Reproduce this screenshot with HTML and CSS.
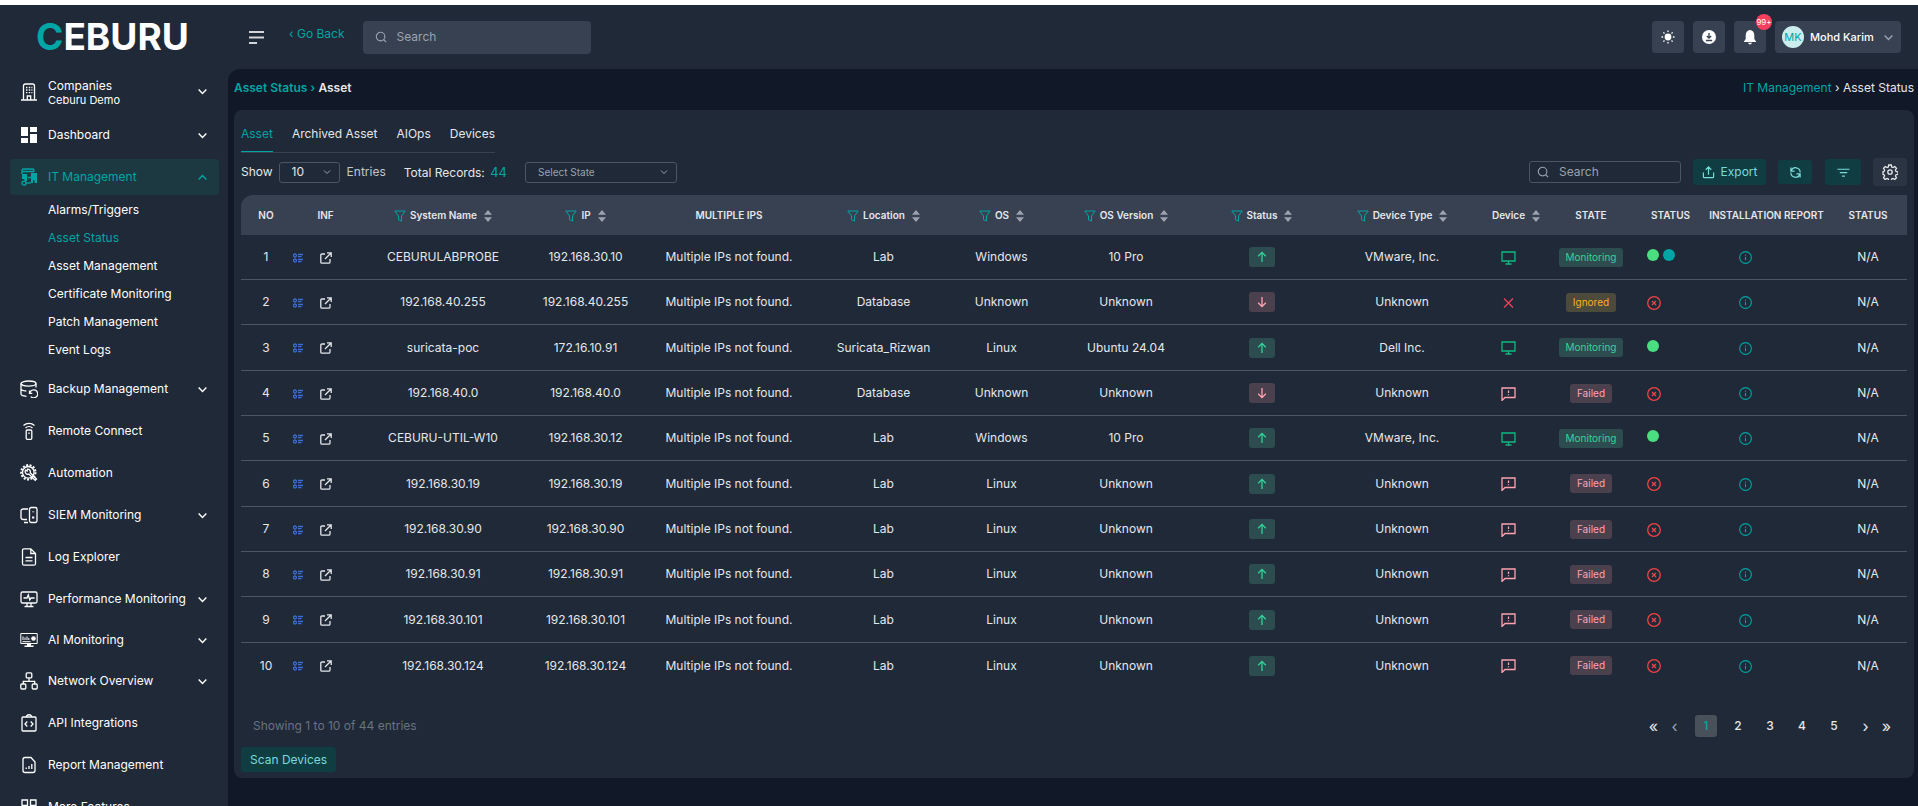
FILE: index.html
```html
<!DOCTYPE html>
<html lang="en">
<head>
  <meta charset="UTF-8">
  <meta name="viewport" content="width=device-width, initial-scale=1.0">
  <title>Ceburu - Asset Status</title>
  <link rel="stylesheet" href="styles.css">
</head>
<body>

  <!-- icon sprite -->
  <svg class="sprite" aria-hidden="true">
    <symbol id="i-down" viewBox="0 0 10 10"><path d="M1.5 3.2 5 6.8l3.500-3.600"/></symbol>
    <symbol id="i-up" viewBox="0 0 10 10"><path d="M1.500 6.800 5 3.200l3.500 3.600"/></symbol>
    <symbol id="i-building" viewBox="0 0 18 18"><path d="M1 17h16M3.500 17V3q0-2 2-2h7q2 0 2 2v14M7.300 17v-4h3.400v4"/><path d="M6 4.500h1.400M8.800 4.500h1.400M11.400 4.500h1M6 7h1.400M8.800 7h1.400M11.400 7h1M6 9.600h1.400M8.800 9.600h1.400M11.400 9.600h1"/></symbol>
    <symbol id="i-dashboard" viewBox="0 0 18 18"><path class="solid" d="M1 1h7v9H1zM10 1h7v5h-7zM1 12h7v5H1zM10 8h7v9h-7z"/></symbol>
    <symbol id="i-it" viewBox="0 0 18 18"><path d="M2 6V2.500Q2 1 3.500 1h9q1.500 0 1.500 1.500V4M2 3.500h12M8 9.500h3"/><path class="solid" d="M2 6h5v7H5l-1-2H2zM11 5h6v10h-2l-1-3h-1v3h-2z"/><circle cx="4" cy="15.200" r="2"/><path d="M6 15h5"/></symbol>
    <symbol id="i-backup" viewBox="0 0 18 18"><ellipse cx="8.500" cy="3.600" rx="7.500" ry="2.600"/><path d="M1 3.600v10.200c0 1.400 2.500 2.300 5.500 2.500M16 3.600v4M1 8.700c0 1.300 2.300 2.100 5.300 2.300"/><path d="M9.500 10.500v2.800h2.800M9.800 13a4 4 0 1 1 1 3.600"/></symbol>
    <symbol id="i-remote" viewBox="0 0 18 18"><path d="M3.500 3.500a8 8 0 0 1 11 0M5.500 6a5 5 0 0 1 7 0"/><rect x="6.200" y="8" width="5.600" height="9.300" rx="1"/><path d="M9 10.500v1.500"/></symbol>
    <symbol id="i-auto" viewBox="0 0 18 18"><circle cx="8.300" cy="8.300" r="7.200" stroke-width="2" stroke-dasharray="2 1.500"/><circle cx="8.300" cy="8.300" r="5.800"/><path d="M5.500 6.200l1.700.8.300-1.800a2.700 2.700 0 0 1 2.800 3.600l6.200 6.200-1.300 1.300-6.400-6.200a2.700 2.700 0 0 1-3.300-3.900z"/></symbol>
    <symbol id="i-siem" viewBox="0 0 18 18"><path d="M8 3H3.500Q1 3 1 5v6.500Q1 13.500 3.500 13.500H7M4 16.500h4"/><rect x="9.500" y="1.500" width="7.500" height="15" rx="1.800"/><path d="M13.200 5.500v.8M13.200 10.500v2" stroke-width="2.200"/></symbol>
    <symbol id="i-log" viewBox="0 0 18 18"><path d="M10.800 0.800H4q-1.500 0-1.500 1.500v13.400q0 1.500 1.500 1.500h10q1.500 0 1.500-1.500V5.500zV5.500h4.700M5.500 9.500h7M5.500 12.800h7"/></symbol>
    <symbol id="i-perf" viewBox="0 0 18 18"><rect x="1" y="2" width="16" height="11" rx="1.500"/><path d="M3.500 8H7l1.300-3 1.500 5 1.300-2h3.500M7 13v3M11 13v3M4.500 16.500h9"/></symbol>
    <symbol id="i-ai" viewBox="0 0 18 18"><path stroke-width="1" d="M.8 2.500h16.400v10H.8zM3 9V5.500M5 9V6.500M7 9V5.500M8.800 9V7M2.500 10.700h8"/><circle class="solid" cx="13.500" cy="7.500" r="2.300"/><path class="solid" d="M7 13h4v1.500h2.500V16h-9v-1.500H7z"/></symbol>
    <symbol id="i-network" viewBox="0 0 18 18"><rect x="6.200" y=".9" width="5.600" height="5" rx="1"/><rect x=".8" y="12" width="5" height="5" rx="1"/><rect x="12.200" y="12" width="5" height="5" rx="1"/><path d="M9 6v3M3.300 12V9.300h11.400V12"/></symbol>
    <symbol id="i-api" viewBox="0 0 18 18"><rect x="2" y="3" width="14" height="14" rx="1"/><path d="M6.500 3V2Q9-.5 11.500 2v1M7.300 7.500 5 10l2.300 2.500M10.700 7.500 13 10l-2.300 2.500"/></symbol>
    <symbol id="i-report" viewBox="0 0 18 18"><path d="M11 1.500H5q-2 0-2 2v11q0 2 2 2h8q2 0 2-2V6z"/><path d="M6.200 13v-1.500M9 13V10M11.800 13V8"/></symbol>
    <symbol id="i-more" viewBox="0 0 18 18"><path d="M2 2h5.500v5.500H2zM10.500 2H16v5.500h-5.500zM2 10.500h5.500V16H2zM10.500 10.500H16V16h-5.500z"/></symbol>
    <symbol id="i-menu" viewBox="0 0 16 14"><path stroke-width="1.800" d="M0 2h15M0 7.500h15M0 13h8"/></symbol>
    <symbol id="i-search" viewBox="0 0 14 14"><circle cx="6.500" cy="6.500" r="5"/><path d="M10.200 10.200 13 13"/></symbol>
    <symbol id="i-sun" viewBox="0 0 14 14"><circle class="solid" cx="7" cy="7" r="3.400"/><path d="M7 .5v1.600M7 11.900v1.600M.5 7h1.600M11.900 7h1.600M2.400 2.400l1.100 1.100M10.500 10.500l1.100 1.100M2.400 11.600l1.100-1.100M10.500 3.500l1.100-1.100"/></symbol>
    <symbol id="i-download" viewBox="0 0 14 14"><circle class="solid" cx="7" cy="7" r="7"/><path stroke="#374151" d="M7 3v5M4.800 6 7 8.200 9.200 6M4 10.500h6"/></symbol>
    <symbol id="i-bell" viewBox="0 0 14 16"><path class="solid" d="M7 1Q3 1.500 2.700 6v4L1 12.500V13h12v-.5L11.300 10V6Q11 1.500 7 1zM5 13.800h4Q8.500 15.500 7 15.500T5 13.800z"/></symbol>
    <symbol id="i-export" viewBox="0 0 14 14"><path d="M7 9.500V1M4 4l3-3 3 3M1.500 7v4.500q0 1 1 1h9q1 0 1-1V7"/></symbol>
    <symbol id="i-refresh" viewBox="0 0 14 14"><path d="M2 1.500v4h4M2.300 5.200A5 5 0 0 1 12 7M12 12.500v-4H8M11.700 8.800A5 5 0 0 1 2 7"/></symbol>
    <symbol id="i-lines" viewBox="0 0 14 14"><path d="M.5 3.500h13M3 7.200h8M5.500 11h3"/></symbol>
    <symbol id="i-gear" viewBox="0 0 16 16"><circle cx="8" cy="8" r="2.200"/><path d="M6.700 1h2.600l.4 2 1.300.600 1.800-1.100 1.700 1.800-1.100 1.700.600 1.400 2 .400v2.500l-2 .4-.6 1.300 1.100 1.700-1.700 1.800-1.800-1.100-1.300.600-.4 2H6.700l-.4-2-1.300-.600-1.800 1.100-1.700-1.800 1.100-1.700L2 10.700l-1-.4V7.800l1-.4.600-1.400-1.100-1.700 1.700-1.800L5 3.600 6.300 3z"/></symbol>
    <symbol id="i-funnel" viewBox="0 0 12 12"><path d="M.8 1h10.400L7.500 6v5l-3-1.200V6z"/></symbol>
    <symbol id="i-sort" viewBox="0 0 8 12"><path class="solid" d="M4 0 8 4.800H0zM4 12 0 7.200h8z"/></symbol>
    <symbol id="i-list" viewBox="0 0 10 10"><circle cx="2" cy="2.500" r="1.500"/><circle cx="2" cy="7.500" r="1.500"/><path d="M5 1.500h5M5 3.700h3.500M5 6.500h5M5 8.700h3.500"/></symbol>
    <symbol id="i-open" viewBox="0 0 12 12"><path d="M5 2H2Q.8 2 .8 3.200v7Q.8 11.200 2 11.200h6.800q1.200 0 1.200-1.200V7M7 .8h4.200V5M11 1 5 7"/></symbol>
    <symbol id="i-monitor" viewBox="0 0 15 14"><path d="M1 1h13v9H1zM7.500 10v3M4.500 13h6"/></symbol>
    <symbol id="i-cross" viewBox="0 0 15 14"><path d="M3 2.500l9 9M12 2.500l-9 9"/></symbol>
    <symbol id="i-alert" viewBox="0 0 15 14"><path d="M1 13.500V1h13v9.500H4zM7.500 3.500V6M7.500 7.300v1"/></symbol>
    <symbol id="i-fail" viewBox="0 0 14 14"><circle cx="7" cy="7" r="6.300"/><path d="M5 5l4 4M9 5 5 9"/></symbol>
    <symbol id="i-info" viewBox="0 0 12 12"><circle cx="6" cy="6" r="5.400"/><path d="M6 5.300v3.200M6 3.300v1"/></symbol>
    <symbol id="i-arrow-up" viewBox="0 0 12 12"><path d="M6 11V1.500M2.200 5.200 6 1.400l3.800 3.800"/></symbol>
    <symbol id="i-arrow-down" viewBox="0 0 12 12"><path d="M6 1v9.500M2.200 6.800 6 10.600l3.800-3.800"/></symbol>
  </svg>

  <div class="app">
    <aside class="sidebar">
      <a class="logo" href="#"><span>C</span>EBURU</a>
      <nav>
        <ul class="menu">
          <li class="company"><a href="#"><svg><use href="#i-building"/></svg><span>Companies<small>Ceburu Demo</small></span><svg class="chev"><use href="#i-down"/></svg></a></li>
          <li><a href="#"><svg><use href="#i-dashboard"/></svg><span>Dashboard</span><svg class="chev"><use href="#i-down"/></svg></a></li>
          <li class="open"><a href="#"><svg><use href="#i-it"/></svg><span>IT Management</span><svg class="chev"><use href="#i-up"/></svg></a>
            <ul class="submenu">
              <li><a href="#">Alarms/Triggers</a></li>
              <li><a href="#" class="active">Asset Status</a></li>
              <li><a href="#">Asset Management</a></li>
              <li><a href="#">Certificate Monitoring</a></li>
              <li><a href="#">Patch Management</a></li>
              <li><a href="#">Event Logs</a></li>
            </ul>
          </li>
          <li><a href="#"><svg><use href="#i-backup"/></svg><span>Backup Management</span><svg class="chev"><use href="#i-down"/></svg></a></li>
          <li><a href="#"><svg><use href="#i-remote"/></svg><span>Remote Connect</span></a></li>
          <li><a href="#"><svg><use href="#i-auto"/></svg><span>Automation</span></a></li>
          <li><a href="#"><svg><use href="#i-siem"/></svg><span>SIEM Monitoring</span><svg class="chev"><use href="#i-down"/></svg></a></li>
          <li><a href="#"><svg><use href="#i-log"/></svg><span>Log Explorer</span></a></li>
          <li><a href="#"><svg><use href="#i-perf"/></svg><span>Performance Monitoring</span><svg class="chev"><use href="#i-down"/></svg></a></li>
          <li class="slim"><a href="#"><svg><use href="#i-ai"/></svg><span>AI Monitoring</span><svg class="chev"><use href="#i-down"/></svg></a></li>
          <li><a href="#"><svg><use href="#i-network"/></svg><span>Network Overview</span><svg class="chev"><use href="#i-down"/></svg></a></li>
          <li><a href="#"><svg><use href="#i-api"/></svg><span>API Integrations</span></a></li>
          <li><a href="#"><svg><use href="#i-report"/></svg><span>Report Management</span></a></li>
          <li><a href="#"><svg><use href="#i-more"/></svg><span>More Features</span></a></li>
        </ul>
      </nav>
    </aside>

    <div class="page">
      <header class="topbar">
        <button class="menu-btn" aria-label="Toggle menu"><svg><use href="#i-menu"/></svg></button>
        <a class="back" href="#">‹ Go Back</a>
        <label class="search top-search"><svg><use href="#i-search"/></svg><input type="text" placeholder="Search" aria-label="Search"></label>
        <div class="top-actions">
          <button class="icon-btn" aria-label="Theme"><svg><use href="#i-sun"/></svg></button>
          <button class="icon-btn" aria-label="Downloads"><svg><use href="#i-download"/></svg></button>
          <button class="icon-btn" aria-label="Notifications"><svg><use href="#i-bell"/></svg><span class="count">99+</span></button>
          <button class="user"><span class="avatar">MK</span><b>Mohd Karim</b><svg class="chev"><use href="#i-down"/></svg></button>
        </div>
      </header>

      <main>
        <div class="crumbs">
          <h1><a href="#">Asset Status ›</a> Asset</h1>
          <p><a href="#">IT Management</a> › Asset Status</p>
        </div>

        <section class="card">
          <div class="tabs">
            <a href="#" class="active">Asset</a>
            <a href="#">Archived Asset</a>
            <a href="#">AIOps</a>
            <a href="#">Devices</a>
          </div>

          <div class="toolbar">
            <label for="entries">Show</label>
            <select id="entries" class="entries"><option>10</option></select>
            <span class="muted">Entries</span>
            <span class="total">Total Records: <b>44</b></span>
            <select class="state" aria-label="Select State"><option>Select State</option></select>
            <label class="search table-search"><svg><use href="#i-search"/></svg><input type="text" placeholder="Search" aria-label="Search assets"></label>
            <button class="btn export"><svg><use href="#i-export"/></svg>Export</button>
            <button class="btn refresh" aria-label="Refresh"><svg><use href="#i-refresh"/></svg></button>
            <button class="btn filter" aria-label="Filter"><svg><use href="#i-lines"/></svg></button>
            <button class="btn settings" aria-label="Settings"><svg><use href="#i-gear"/></svg></button>
          </div>

          <table>
            <colgroup>
              <col class="w-no"><col class="w-list"><col class="w-inf"><col class="w-name"><col class="w-ip"><col class="w-multi">
              <col class="w-loc"><col class="w-os"><col class="w-ver"><col class="w-stat"><col class="w-type"><col class="w-dev">
              <col class="w-state"><col class="w-conn"><col class="w-inst"><col class="w-last">
            </colgroup>
            <thead>
              <tr>
                <th>NO</th>
                <th></th>
                <th>INF</th>
                <th><svg class="funnel"><use href="#i-funnel"/></svg>System Name<svg class="sort"><use href="#i-sort"/></svg></th>
                <th><svg class="funnel"><use href="#i-funnel"/></svg>IP<svg class="sort"><use href="#i-sort"/></svg></th>
                <th>MULTIPLE IPS</th>
                <th><svg class="funnel"><use href="#i-funnel"/></svg>Location<svg class="sort"><use href="#i-sort"/></svg></th>
                <th><svg class="funnel"><use href="#i-funnel"/></svg>OS<svg class="sort"><use href="#i-sort"/></svg></th>
                <th><svg class="funnel"><use href="#i-funnel"/></svg>OS Version<svg class="sort"><use href="#i-sort"/></svg></th>
                <th><svg class="funnel"><use href="#i-funnel"/></svg>Status<svg class="sort"><use href="#i-sort"/></svg></th>
                <th><svg class="funnel"><use href="#i-funnel"/></svg>Device Type<svg class="sort"><use href="#i-sort"/></svg></th>
                <th class="device-head">Device<svg class="sort"><use href="#i-sort"/></svg></th>
                <th>STATE</th>
                <th>STATUS</th>
                <th>INSTALLATION REPORT</th>
                <th>STATUS</th>
              </tr>
            </thead>
            <tbody id="rows"></tbody>
          </table>

          <div class="table-foot">
            <p>Showing 1 to 10 of 44 entries</p>
            <div class="pager">
              <span>
                <button class="arrow">«</button>
                <button class="arrow" disabled>‹</button>
              </span>
              <button class="active">1</button>
              <button>2</button>
              <button>3</button>
              <button>4</button>
              <button>5</button>
              <span>
                <button class="arrow">›</button>
                <button class="arrow">»</button>
              </span>
            </div>
          </div>
          <button class="btn scan">Scan Devices</button>
        </section>
      </main>
    </div>
  </div>

  <script>
    // name, ip, location, os, version, up/down, device type, state, dots
    const assets = [
      ['CEBURULABPROBE', '192.168.30.10', 'Lab', 'Windows', '10 Pro', 'up', 'VMware, Inc.', 'Monitoring', 2],
      ['192.168.40.255', '192.168.40.255', 'Database', 'Unknown', 'Unknown', 'down', 'Unknown', 'Ignored', 0],
      ['suricata-poc', '172.16.10.91', 'Suricata_Rizwan', 'Linux', 'Ubuntu 24.04', 'up', 'Dell Inc.', 'Monitoring', 1],
      ['192.168.40.0', '192.168.40.0', 'Database', 'Unknown', 'Unknown', 'down', 'Unknown', 'Failed', 0],
      ['CEBURU-UTIL-W10', '192.168.30.12', 'Lab', 'Windows', '10 Pro', 'up', 'VMware, Inc.', 'Monitoring', 1],
      ['192.168.30.19', '192.168.30.19', 'Lab', 'Linux', 'Unknown', 'up', 'Unknown', 'Failed', 0],
      ['192.168.30.90', '192.168.30.90', 'Lab', 'Linux', 'Unknown', 'up', 'Unknown', 'Failed', 0],
      ['192.168.30.91', '192.168.30.91', 'Lab', 'Linux', 'Unknown', 'up', 'Unknown', 'Failed', 0],
      ['192.168.30.101', '192.168.30.101', 'Lab', 'Linux', 'Unknown', 'up', 'Unknown', 'Failed', 0],
      ['192.168.30.124', '192.168.30.124', 'Lab', 'Linux', 'Unknown', 'up', 'Unknown', 'Failed', 0]
    ];

    const deviceIcon = { Monitoring: 'monitor', Ignored: 'cross', Failed: 'alert' };

    function icon(name, cls) {
      return `<svg class="${cls}"><use href="#i-${name}"/></svg>`;
    }

    function connection(dots) {
      if (dots === 0) return icon('fail', 'fail');
      return '<i class="dot"></i>' + (dots === 2 ? '<i class="dot teal"></i>' : '');
    }

    document.getElementById('rows').innerHTML = assets.map(([name, ip, loc, os, ver, dir, type, state, dots], i) => `
      <tr>
        <td>${i + 1}</td>
        <td>${icon('list', 'list')}</td>
        <td>${icon('open', 'open-link')}</td>
        <td>${name}</td>
        <td>${ip}</td>
        <td>Multiple IPs not found.</td>
        <td>${loc}</td>
        <td>${os}</td>
        <td>${ver}</td>
        <td><span class="dir ${dir}">${icon('arrow-' + dir, '')}</span></td>
        <td>${type}</td>
        <td>${icon(deviceIcon[state], 'device ' + state.toLowerCase())}</td>
        <td><span class="badge ${state.toLowerCase()}">${state}</span></td>
        <td class="conn">${connection(dots)}</td>
        <td class="report">${icon('info', 'info')}</td>
        <td>N/A</td>
      </tr>`).join('');
  </script>
</body>
</html>
```
FILE: styles.css
```css
* {
  box-sizing: border-box;
}

body {
  margin: 0;
  background: #111827;
  color: #e5e7eb;
  font-family: Inter, "Noto Sans", sans-serif;
  font-size: 12px;
  font-weight: 400;
  line-height: 18px;
}

a {
  color: inherit;
  text-decoration: none;
}

ul {
  list-style: none;
  margin: 0;
  padding: 0;
}

h1,
p {
  margin: 0;
}

button,
input,
select {
  font: inherit;
  color: inherit;
  border: none;
  background: none;
  padding: 0;
  margin: 0;
}

button {
  cursor: pointer;
}

svg {
  fill: none;
  stroke: currentColor;
  stroke-width: 1.3;
  flex: none;
}

.solid {
  fill: currentColor;
  stroke: none;
}

.sprite {
  display: none;
}

.chev {
  width: 11px;
  height: 11px;
}

.app {
  display: flex;
  height: 100vh;
  overflow: hidden;
  border-top: 5px solid #fff;
  background: #1f2937;
}

/* sidebar */
.sidebar {
  width: 228px;
  flex: none;
  color: #fff;
}

.logo {
  display: flex;
  align-items: center;
  height: 64px;
  padding-left: 36px;
  font-size: 37px;
  font-weight: 700;
}

.logo span {
  color: #00a5a5;
}

.menu {
  padding: 0 9px 0 10px;
}

.menu > li {
  padding: 3px 0;
}

.menu > li > a {
  display: flex;
  align-items: center;
  gap: 10px;
  height: 36px;
  padding: 0 11px 0 10px;
  border-radius: 4px;
  white-space: nowrap;
}

.menu > li > a > svg:first-child {
  width: 18px;
  height: 18px;
}

.menu > .company > a {
  height: 39px;
}

.menu > .slim > a {
  height: 34px;
}

.menu .chev {
  margin-left: auto;
}

.menu small {
  display: block;
  font-size: 11px;
  line-height: 12px;
}

.company span {
  line-height: 16px;
}

.open > a {
  background: #1c3840;
  color: #00a5a5;
}

.submenu {
  display: grid;
  gap: 10px;
  padding: 6px 0 6px 38px;
}

.submenu .active {
  color: #00a5a5;
}

/* header */
.page {
  flex: 1;
  min-width: 0;
  display: flex;
  flex-direction: column;
}

.topbar {
  display: flex;
  align-items: center;
  height: 64px;
  padding: 0 17px 0 21px;
}

.menu-btn svg {
  display: block;
  width: 16px;
  height: 14px;
  color: #d1d5db;
}

.back {
  margin-left: 24px;
  padding-bottom: 6px;
  color: #00a5a5;
}

.search {
  display: flex;
  align-items: center;
  gap: 10px;
  padding: 0 10px;
  color: #9ca3af;
}

.search svg {
  width: 12px;
  height: 12px;
}

.search input {
  flex: 1;
  min-width: 0;
  outline: none;
}

.search input::placeholder {
  color: #9ca3af;
  opacity: 1;
}

.top-search {
  width: 228px;
  height: 33px;
  margin-left: 18px;
  padding-left: 12px;
  border-radius: 4px;
  background: #374151;
}

.top-actions {
  display: flex;
  gap: 9px;
  margin-left: auto;
}

.icon-btn,
.user {
  position: relative;
  display: flex;
  align-items: center;
  justify-content: center;
  width: 32px;
  height: 32px;
  border-radius: 4px;
  background: #374151;
  color: #fff;
}

.icon-btn svg {
  width: 14px;
  height: 16px;
}

.count {
  position: absolute;
  top: -7px;
  right: -6px;
  width: 16px;
  height: 16px;
  border-radius: 50%;
  background: #f43f5e;
  font-size: 8px;
  line-height: 16px;
}

.user {
  width: 126px;
  justify-content: flex-start;
  gap: 6px;
  padding: 0 7px;
  font-size: 11px;
  white-space: nowrap;
}

.user b {
  font-weight: 500;
}

.user .chev {
  margin-left: auto;
  color: #9ca3af;
}

.avatar {
  width: 22px;
  height: 22px;
  border-radius: 50%;
  background: #cceded;
  color: #00a5a5;
  line-height: 22px;
}

/* content */
main {
  flex: 1;
  padding: 0 4px 0 6px;
  background: #111827;
  border-top-left-radius: 12px;
}

.crumbs {
  display: flex;
  align-items: center;
  justify-content: space-between;
  height: 41px;
  padding-bottom: 4px;
}

.crumbs a {
  color: #00a5a5;
}

.crumbs h1 {
  font-size: 12px;
  font-weight: 600;
}

.card {
  padding: 12px 7px 6px;
  border-radius: 8px;
  background: #1f2937;
}

.tabs {
  display: flex;
  gap: 19px;
  width: max-content;
  border-bottom: 1px solid #374151;
}

.tabs a {
  height: 30px;
  line-height: 24px;
}

.tabs .active {
  border-bottom: 1px solid #00a5a5;
  color: #00a5a5;
}

.toolbar {
  display: flex;
  align-items: center;
  height: 38px;
  margin-bottom: 4px;
}

.toolbar select {
  appearance: none;
  height: 21px;
  border: 1px solid #4b5563;
  border-radius: 3px;
  background: url("data:image/svg+xml,%3Csvg xmlns='http://www.w3.org/2000/svg' viewBox='0 0 10 10' fill='none' stroke='%239ca3af'%3E%3Cpath d='M2 3.500 5 6.500l3-3'/%3E%3C/svg%3E") no-repeat right 7px center / 10px;
}

.entries {
  width: 61px;
  margin: 0 7px 0 6px;
  padding-left: 12px;
}

.muted {
  color: #c0c5cd;
}

.total {
  margin-left: 18px;
}

.total b {
  margin-left: 2px;
  color: #00a5a5;
  font-size: 13px;
  font-weight: 400;
}

.toolbar .state {
  width: 152px;
  margin-left: 18px;
  padding-left: 12px;
  color: #9ca3af;
  font-size: 10px;
}

.table-search {
  width: 152px;
  height: 22px;
  margin-left: auto;
  margin-right: 12px;
  padding: 0 7px;
  border: 1px solid #4b5563;
  border-radius: 3px;
}

.btn {
  display: flex;
  align-items: center;
  justify-content: center;
  gap: 6px;
  height: 26px;
  border-radius: 3px;
  background: #0f3d42;
  color: #7adada;
}

.btn svg {
  width: 13px;
  height: 13px;
}

.export {
  width: 73px;
}

.refresh {
  width: 34px;
  height: 24px;
  margin: 0 13px 0 12px;
}

.filter {
  width: 36px;
}

.settings {
  width: 34px;
  height: 28px;
  margin-left: 12px;
  background: #2b3443;
  color: #e5e7eb;
}

.settings svg {
  width: 16px;
  height: 16px;
}

/* table */
table {
  width: 100%;
  table-layout: fixed;
  border-collapse: separate;
  border-spacing: 0;
  text-align: center;
}

.w-no { width: 50px; }
.w-list { width: 13px; }
.w-inf { width: 43px; }
.w-name { width: 192px; }
.w-ip { width: 93px; }
.w-multi { width: 194px; }
.w-loc { width: 115px; }
.w-os { width: 121px; }
.w-ver { width: 128px; }
.w-stat { width: 143px; }
.w-type { width: 138px; }
.w-dev { width: 74px; }
.w-state { width: 92px; }
.w-conn { width: 67px; }
.w-inst { width: 125px; }
.w-last { width: 78px; }

th,
td {
  padding: 0;
  white-space: nowrap;
}

th {
  height: 40px;
  background: #374151;
  font-size: 10px;
  font-weight: 600;
}

th:first-child {
  border-top-left-radius: 12px;
}

th svg,
td svg {
  vertical-align: middle;
}

.funnel {
  width: 12px;
  height: 12px;
  margin-right: 4px;
  color: #00a5a5;
  stroke-width: 1;
}

.sort {
  width: 8px;
  height: 12px;
  margin-left: 7px;
  color: #9ca3af;
}

.device-head {
  padding-left: 16px;
}

td {
  height: 45px;
  border-bottom: 1px solid #4b5563;
}

tr:nth-child(3n) td {
  height: 46px;
}

tr:last-child td {
  border-bottom: none;
}

.list {
  width: 10px;
  height: 10px;
  color: #3b6fd0;
}

.open-link {
  width: 12px;
  height: 12px;
}

.dir {
  display: inline-flex;
  align-items: center;
  justify-content: center;
  width: 26px;
  height: 20px;
  border-radius: 3px;
  vertical-align: middle;
}

.dir svg {
  width: 12px;
  height: 12px;
}

.up,
.badge.monitoring {
  background: #2d4c4f;
  color: #34d399;
}

.down,
.badge.failed {
  background: #4b414e;
  color: #fda4af;
}

.badge.ignored {
  background: #4b4a3b;
  color: #fbb124;
}

.badge {
  display: inline-block;
  padding: 0 7px;
  border-radius: 3px;
  font-size: 10px;
  line-height: 19px;
}

.device {
  width: 15px;
  height: 14px;
}

.device.monitoring { color: #10b981; }
.device.ignored { color: #f43f5e; }
.device.failed { color: #fda4af; }

.conn {
  padding-left: 10px;
  text-align: left;
}

.dot {
  display: inline-block;
  width: 12px;
  height: 12px;
  margin-right: 4px;
  border-radius: 50%;
  background: #4ade80;
}

.dot.teal {
  background: #00a5a5;
}

.fail {
  width: 14px;
  height: 14px;
  color: #ef4444;
}

.report {
  padding-left: 35px;
  text-align: left;
}

.info {
  width: 13px;
  height: 13px;
  color: #00a5a5;
  stroke-width: 1;
}

/* footer */
.table-foot {
  display: flex;
  align-items: center;
  justify-content: space-between;
  margin-top: 27px;
  padding: 0 10px 0 12px;
}

.table-foot p {
  color: #6b7280;
}

.pager,
.pager span {
  display: flex;
  align-items: center;
}

.pager {
  gap: 10px;
}

.pager button {
  width: 22px;
  height: 22px;
  border-radius: 3px;
  font-weight: 500;
}

.pager .active {
  background: #485159;
  color: #00a5a5;
}

.pager .arrow {
  width: 21px;
  font-size: 16px;
  font-weight: 400;
}

.pager :disabled {
  color: #9ca3af;
}

.scan {
  height: 25px;
  margin-top: 10px;
  padding: 0 9px;
}
```
